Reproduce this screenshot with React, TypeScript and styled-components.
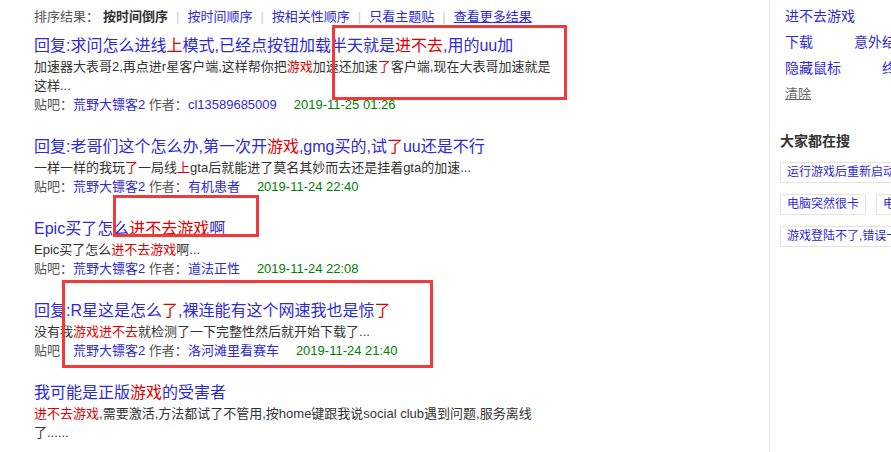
import styled, { createGlobalStyle } from 'styled-components'

const GlobalStyle = createGlobalStyle`
  html, body { margin: 0; padding: 0; background: #fff; }
  body {
    font-family: "Liberation Sans", Arial, "Noto Sans CJK SC", sans-serif;
    color: #333;
    overflow: hidden;
  }
  a { text-decoration: none; }
`

const BLUE = '#2e2ad6'
const RED = '#e10000'

const Page = styled.div`
  display: flex;
  width: 891px;
  height: 452px;
  overflow: hidden;
`

const Main = styled.div`
  position: relative;
  width: 769px;
  flex: none;
  box-sizing: border-box;
  padding: 7px 0 0 34px;
`

const SortBar = styled.div`
  font-size: 13px;
  line-height: 20px;
  white-space: nowrap;
  color: #555;
  margin-bottom: 8px;
`

const Current = styled.b`
  color: #333;
  margin-left: 4px;
`

const Sep = styled.span`
  color: #ccc;
  margin: 0 8px;
`

const SortLink = styled.a<{ $underline?: boolean }>`
  color: ${BLUE};
  text-decoration: ${p => (p.$underline ? 'underline' : 'none')};
`

const Results = styled.div`
  width: 520px;
`

const Entry = styled.div`
  margin-bottom: 21px;
`

const Title = styled.a`
  display: block;
  font-size: 16px;
  line-height: 22px;
  color: ${BLUE};
  white-space: nowrap;
`

const Abstract = styled.div`
  font-size: 13px;
  line-height: 19px;
  color: #333;
`

const Meta = styled.div`
  font-size: 13px;
  line-height: 20px;
  color: #555;
  white-space: nowrap;
`

const MetaLink = styled.a`
  color: ${BLUE};
`

const Time = styled.span`
  color: #008000;
  margin-left: 17px;
`

const Hit = styled.em`
  font-style: normal;
  color: ${RED};
`

const Mark = styled.div`
  position: absolute;
  border: 3px solid #f23a3a;
  box-sizing: border-box;
  pointer-events: none;
`

const Side = styled.div`
  flex: 1;
  min-width: 0;
  border-left: 1px solid #e8e8e8;
  padding: 3px 0 0 15px;
  overflow: hidden;
`

const WordRow = styled.div`
  display: flex;
  gap: 41px;
  white-space: nowrap;
  font-size: 14px;
  line-height: 26px;
`

const Word = styled.a`
  color: ${BLUE};
`

const Clear = styled.a`
  color: #666;
  font-size: 13px;
  text-decoration: underline;
`

const HotTitle = styled.div`
  margin: 24px 0 11px -5px;
  font-size: 14px;
  line-height: 20px;
  font-weight: bold;
  color: #333;
  white-space: nowrap;
`

const TagRow = styled.div`
  display: flex;
  gap: 10px;
  margin: 0 0 11px -5px;
  white-space: nowrap;
`

const Tag = styled.a`
  flex: none;
  height: 21px;
  box-sizing: border-box;
  padding: 0 6px;
  border: 1px solid #e3e3e3;
  border-radius: 2px;
  font-size: 12px;
  line-height: 19px;
  color: ${BLUE};
`

function marked(s: string) {
  return s.split(/(\{[^}]*\})/).map((part, i) =>
    part.startsWith('{') ? <Hit key={i}>{part.slice(1, -1)}</Hit> : part
  )
}

const results = [
  {
    title: '回复:求问怎么进线{上}模式,已经点按钮加载半天就是{进不去},用的uu加',
    abstract: '加速器大表哥2,再点进r星客户端,这样帮你把{游戏}加速还加速{了}客户端,现在大表哥加速就是这样...',
    author: 'cl13589685009',
    time: '2019-11-25 01:26',
  },
  {
    title: '回复:老哥们这个怎么办,第一次开{游戏},gmg买的,试{了}uu还是不行',
    abstract: '一样一样的我玩{了}一局线{上}gta后就能进了莫名其妙而去还是挂着gta的加速...',
    author: '有机患者',
    time: '2019-11-24 22:40',
  },
  {
    title: 'Epic买了怎么{进不去游戏}啊',
    abstract: 'Epic买了怎么{进不去游戏}啊...',
    author: '道法正性',
    time: '2019-11-24 22:08',
  },
  {
    title: '回复:R星这是怎么{了},裸连能有这个网速我也是惊{了}',
    abstract: '没有我{游戏进不去}就检测了一下完整性然后就开始下载了...',
    author: '洛河滩里看赛车',
    time: '2019-11-24 21:40',
  },
  {
    title: '我可能是正版{游戏}的受害者',
    abstract: '{进不去游戏},需要激活,方法都试了不管用,按home键跟我说social club遇到问题,服务离线了......',
  },
]

const wordRows = [
  ['进不去游戏', '游戏闪退'],
  ['下载', '意外结束'],
  ['隐藏鼠标', '终止运行'],
]

const tagRows = [
  ['运行游戏后重新启动电脑'],
  ['电脑突然很卡', '电脑游戏卡顿'],
  ['游戏登陆不了,错误一直出现'],
]

export default function App() {
  return (
    <Page>
      <GlobalStyle />
      <Main>
        <SortBar>
          排序结果：<Current>按时间倒序</Current>
          <Sep>|</Sep>
          <SortLink>按时间顺序</SortLink>
          <Sep>|</Sep>
          <SortLink>按相关性顺序</SortLink>
          <Sep>|</Sep>
          <SortLink>只看主题贴</SortLink>
          <Sep>|</Sep>
          <SortLink $underline>查看更多结果</SortLink>
        </SortBar>

        <Results>
          {results.map((r, i) => (
            <Entry key={i}>
              <Title>{marked(r.title)}</Title>
              <Abstract>{marked(r.abstract)}</Abstract>
              {r.author && (
                <Meta>
                  贴吧：<MetaLink>荒野大镖客2</MetaLink> 作者：<MetaLink>{r.author}</MetaLink>
                  <Time>{r.time}</Time>
                </Meta>
              )}
            </Entry>
          ))}
        </Results>

        {/* annotation boxes drawn over the results */}
        <Mark style={{ left: 332, top: 25, width: 235, height: 75 }} />
        <Mark style={{ left: 113, top: 195, width: 146, height: 42 }} />
        <Mark style={{ left: 62, top: 280, width: 371, height: 88 }} />
      </Main>

      <Side>
        {wordRows.map((row, i) => (
          <WordRow key={i}>
            {row.map(w => <Word key={w}>{w}</Word>)}
          </WordRow>
        ))}
        <WordRow>
          <Clear>清除</Clear>
        </WordRow>

        <HotTitle>大家都在搜</HotTitle>
        {tagRows.map((row, i) => (
          <TagRow key={i}>
            {row.map(t => <Tag key={t}>{t}</Tag>)}
          </TagRow>
        ))}
      </Side>
    </Page>
  )
}
